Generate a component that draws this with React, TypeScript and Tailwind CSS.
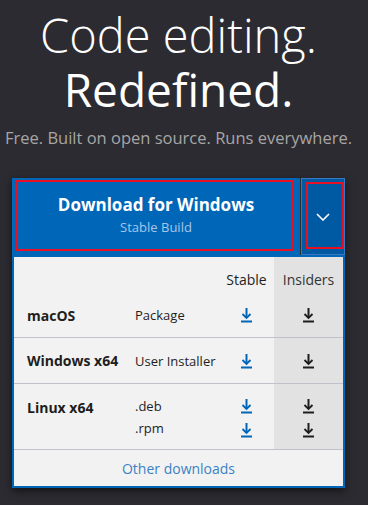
import React from 'react'

const font = { fontFamily: '"Open Sans", "Noto Sans", sans-serif' }

const DownloadIcon = ({ color }: { color: string }) => (
  <svg width="11" height="16" viewBox="0 0 11 16" fill="none" stroke={color} strokeWidth="2">
    <path d="M5.5 1v10" />
    <path d="M1.5 7l4 4 4-4" strokeWidth="1.8" />
    <path d="M0 14.5h11" />
  </svg>
)

type Row = {
  os: string
  kinds: string[]
}

const rows: Row[] = [
  { os: 'macOS', kinds: ['Package'] },
  { os: 'Windows x64', kinds: ['User Installer'] },
  { os: 'Linux x64', kinds: ['.deb', '.rpm'] },
]

const App: React.FC = () => {
  return (
    <div className="min-h-[505px] w-[368px] bg-[#2c2b31] overflow-hidden" style={font}>
      <div className="pr-[11px]">
        <h1 className="pt-[8px] text-center text-white">
          <span className="block text-[47px] font-light leading-[54px]">Code editing.</span>
          <span className="block text-[46px] font-normal leading-[54px]">Redefined.</span>
        </h1>
        <p className="mt-[11px] text-center text-[16.5px] leading-[22px] text-[#a6a6a6]">
          Free. Built on open source. Runs everywhere.
        </p>
      </div>

      <div className="ml-[12px] mt-[29px] w-[333px] shadow-[0_3px_8px_rgba(0,0,0,0.55)]">
        <div className="flex h-[77px]">
          <button className="relative w-[288px] bg-[#0066b8] flex flex-col items-center justify-center pb-[4px]">
            <span className="absolute left-[4px] top-[2px] w-[277px] h-[71px] border-2 border-[#e81123]" />
            <span className="text-[17px] font-bold text-white leading-[24px]">Download for Windows</span>
            <span className="text-[13px] text-[#a8c7e8] leading-[20px]">Stable Build</span>
          </button>
          <div className="w-px" />
          <button className="relative flex-1 bg-[#005aa3] border border-[#3a79c2] flex items-center justify-center">
            <span className="absolute left-[4px] top-[3px] right-0 bottom-[5px] border-2 border-[#e81123]" />
            <svg width="14" height="8" viewBox="0 0 14 8" fill="none" stroke="white" strokeWidth="1.6">
              <path d="M1 1l6 6 6-6" />
            </svg>
          </button>
        </div>

        <div className="border-2 border-[#0066b8] bg-[#f2f2f2] text-[#1e1e1e]">
          <div className="grid grid-cols-[121px_84px_55px_69px]">
            <div className="col-span-2 h-[36px]" />
            <div className="h-[36px] flex items-end justify-center pb-[3px] text-[14px]">Stable</div>
            <div className="h-[36px] flex items-end justify-center pb-[3px] text-[14px] text-[#333] bg-[#e2e2e2]">
              Insiders
            </div>
          </div>
          {rows.map((r, i) => (
            <div
              key={r.os}
              className={`grid grid-cols-[121px_84px_55px_69px] border-b border-[#c3bfce] ${
                i === 2 ? 'h-[66px]' : i === 0 ? 'h-[45px]' : 'h-[46px]'
              }`}
            >
              <div
                className={`pl-[13px] text-[14px] font-bold flex ${
                  r.kinds.length > 1 ? 'items-start pt-[13px]' : 'items-center'
                }`}
              >
                {r.os}
              </div>
              <div
                className={`text-[13px] flex flex-col ${
                  r.kinds.length > 1 ? 'justify-start pt-[13px] gap-[4px]' : 'justify-center'
                }`}
              >
                {r.kinds.map((k) => (
                  <span key={k} className="leading-[18px]">{k}</span>
                ))}
              </div>
              <div
                className={`flex flex-col items-center ${
                  r.kinds.length > 1 ? 'justify-start pt-[14px] gap-[8px]' : 'justify-center'
                }`}
              >
                {r.kinds.map((k) => (
                  <DownloadIcon key={k} color="#0066b8" />
                ))}
              </div>
              <div
                className={`flex flex-col items-center bg-[#e2e2e2] ${
                  r.kinds.length > 1 ? 'justify-start pt-[14px] gap-[8px]' : 'justify-center'
                }`}
              >
                {r.kinds.map((k) => (
                  <DownloadIcon key={k} color="#1e1e1e" />
                ))}
              </div>
            </div>
          ))}
          <div className="h-[36px] flex items-center justify-center text-[14px] text-[#3b82c4]">
            Other downloads
          </div>
        </div>
      </div>
    </div>
  )
}

export default App
